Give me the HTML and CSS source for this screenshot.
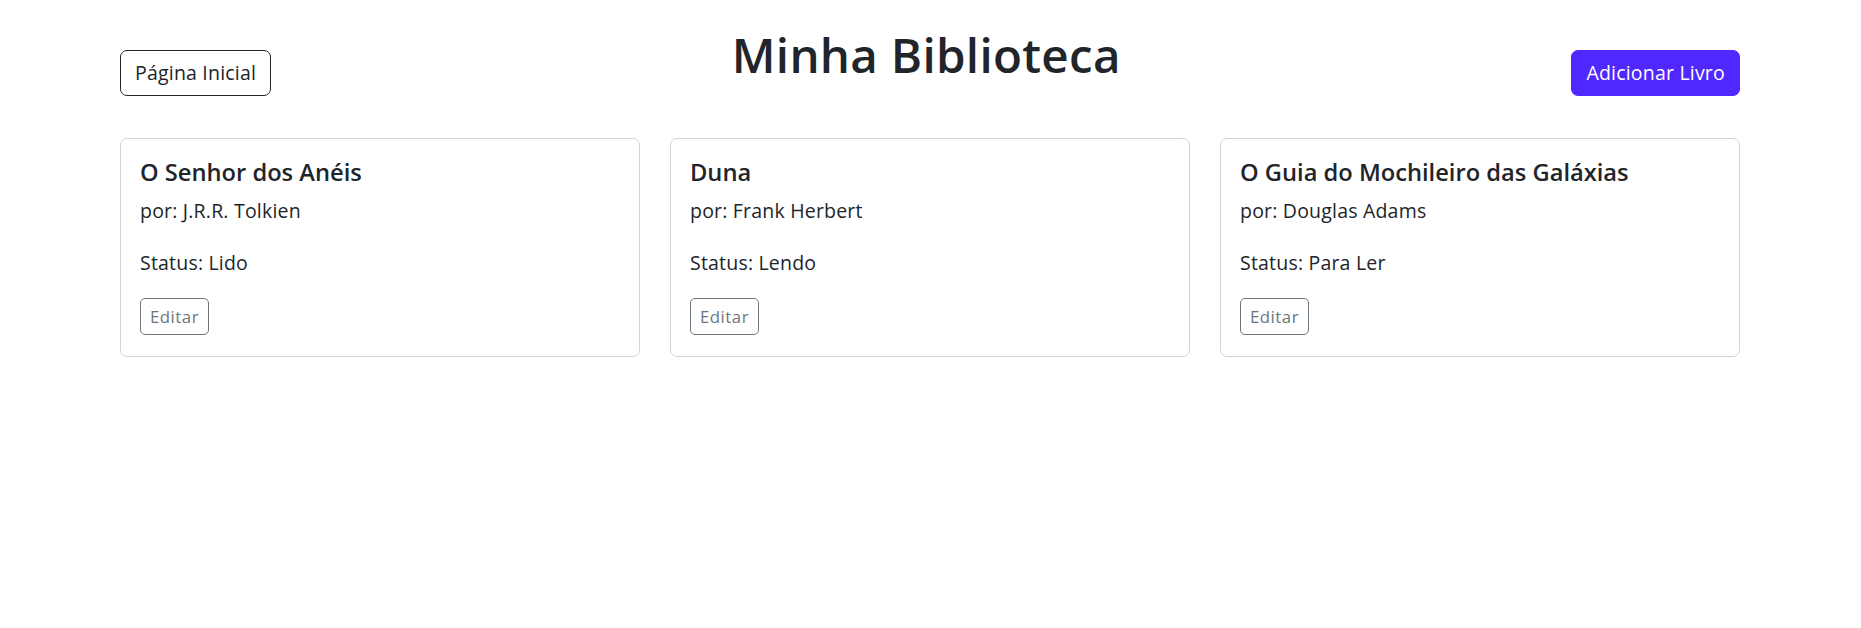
FILE: index.html
```html
<!DOCTYPE html>
<html lang="pt">
<head>
<meta charset="utf-8">
<title>Minha Biblioteca</title>
<link rel="stylesheet" href="styles.css">
</head>
<body>
<div class="page">
  <header class="topbar">
    <a class="btn btn-outline-dark" href="#">Página Inicial</a>
    <h1 class="title">Minha Biblioteca</h1>
    <a class="btn btn-primary" href="#">Adicionar Livro</a>
  </header>
  <main class="grid">
    <div class="card">
      <h5 class="card-title">O Senhor dos Anéis</h5>
      <p class="card-author">por: J.R.R. Tolkien</p>
      <p class="card-status">Status: Lido</p>
      <a class="btn-sm" href="#">Editar</a>
    </div>
    <div class="card">
      <h5 class="card-title">Duna</h5>
      <p class="card-author">por: Frank Herbert</p>
      <p class="card-status">Status: Lendo</p>
      <a class="btn-sm" href="#">Editar</a>
    </div>
    <div class="card">
      <h5 class="card-title">O Guia do Mochileiro das Galáxias</h5>
      <p class="card-author">por: Douglas Adams</p>
      <p class="card-status">Status: Para Ler</p>
      <a class="btn-sm" href="#">Editar</a>
    </div>
  </main>
</div>
</body>
</html>
```
FILE: styles.css
```css
* { box-sizing: border-box; }
html, body { margin: 0; padding: 0; background: #fff; }
body {
  font-family: "Open Sans", "Noto Sans", sans-serif;
  font-size: 19.5px;
  letter-spacing: 0.2px;
  line-height: 1.5;
  color: #212529;
}
.page { padding: 26px 121px 0 120px; }
.topbar {
  display: flex;
  justify-content: space-between;
  align-items: flex-start;
}
.title {
  margin: 0 0 0 10px;
  font-size: 47.5px;
  font-weight: 600;
  letter-spacing: 0.3px;
  line-height: 57px;
}
.btn {
  display: inline-block;
  margin-top: 24px;
  height: 46px;
  padding: 7px 14px;
  font-size: 19.5px;
  line-height: 30px;
  border-radius: 7px;
  border: 1px solid transparent;
  text-decoration: none;
}
.btn-outline-dark { border-color: #212529; color: #212529; }
.btn-primary { background: #5027ff; border-color: #5027ff; color: #fff; }
.grid {
  display: grid;
  grid-template-columns: repeat(3, 1fr);
  gap: 30px;
  margin-top: 42px;
}
.card {
  border: 1px solid #d4d4d6;
  border-radius: 7px;
  padding: 19px 19px 20px;
  height: 219px;
}
.card-title {
  margin: 0 0 10px;
  font-size: 23.7px;
  font-weight: 600;
  letter-spacing: 0;
  line-height: 28.5px;
}
.card-author { margin: 0 0 23.5px; line-height: 28.5px; }
.card-status { margin: 0 0 21px; line-height: 28.5px; }
.btn-sm {
  display: inline-block;
  height: 37px;
  padding: 4px 9px;
  font-size: 16.8px;
  letter-spacing: 0.5px;
  line-height: 27px;
  color: #6c757d;
  border: 1px solid #6c757d;
  border-radius: 5px;
  text-decoration: none;
}
```
